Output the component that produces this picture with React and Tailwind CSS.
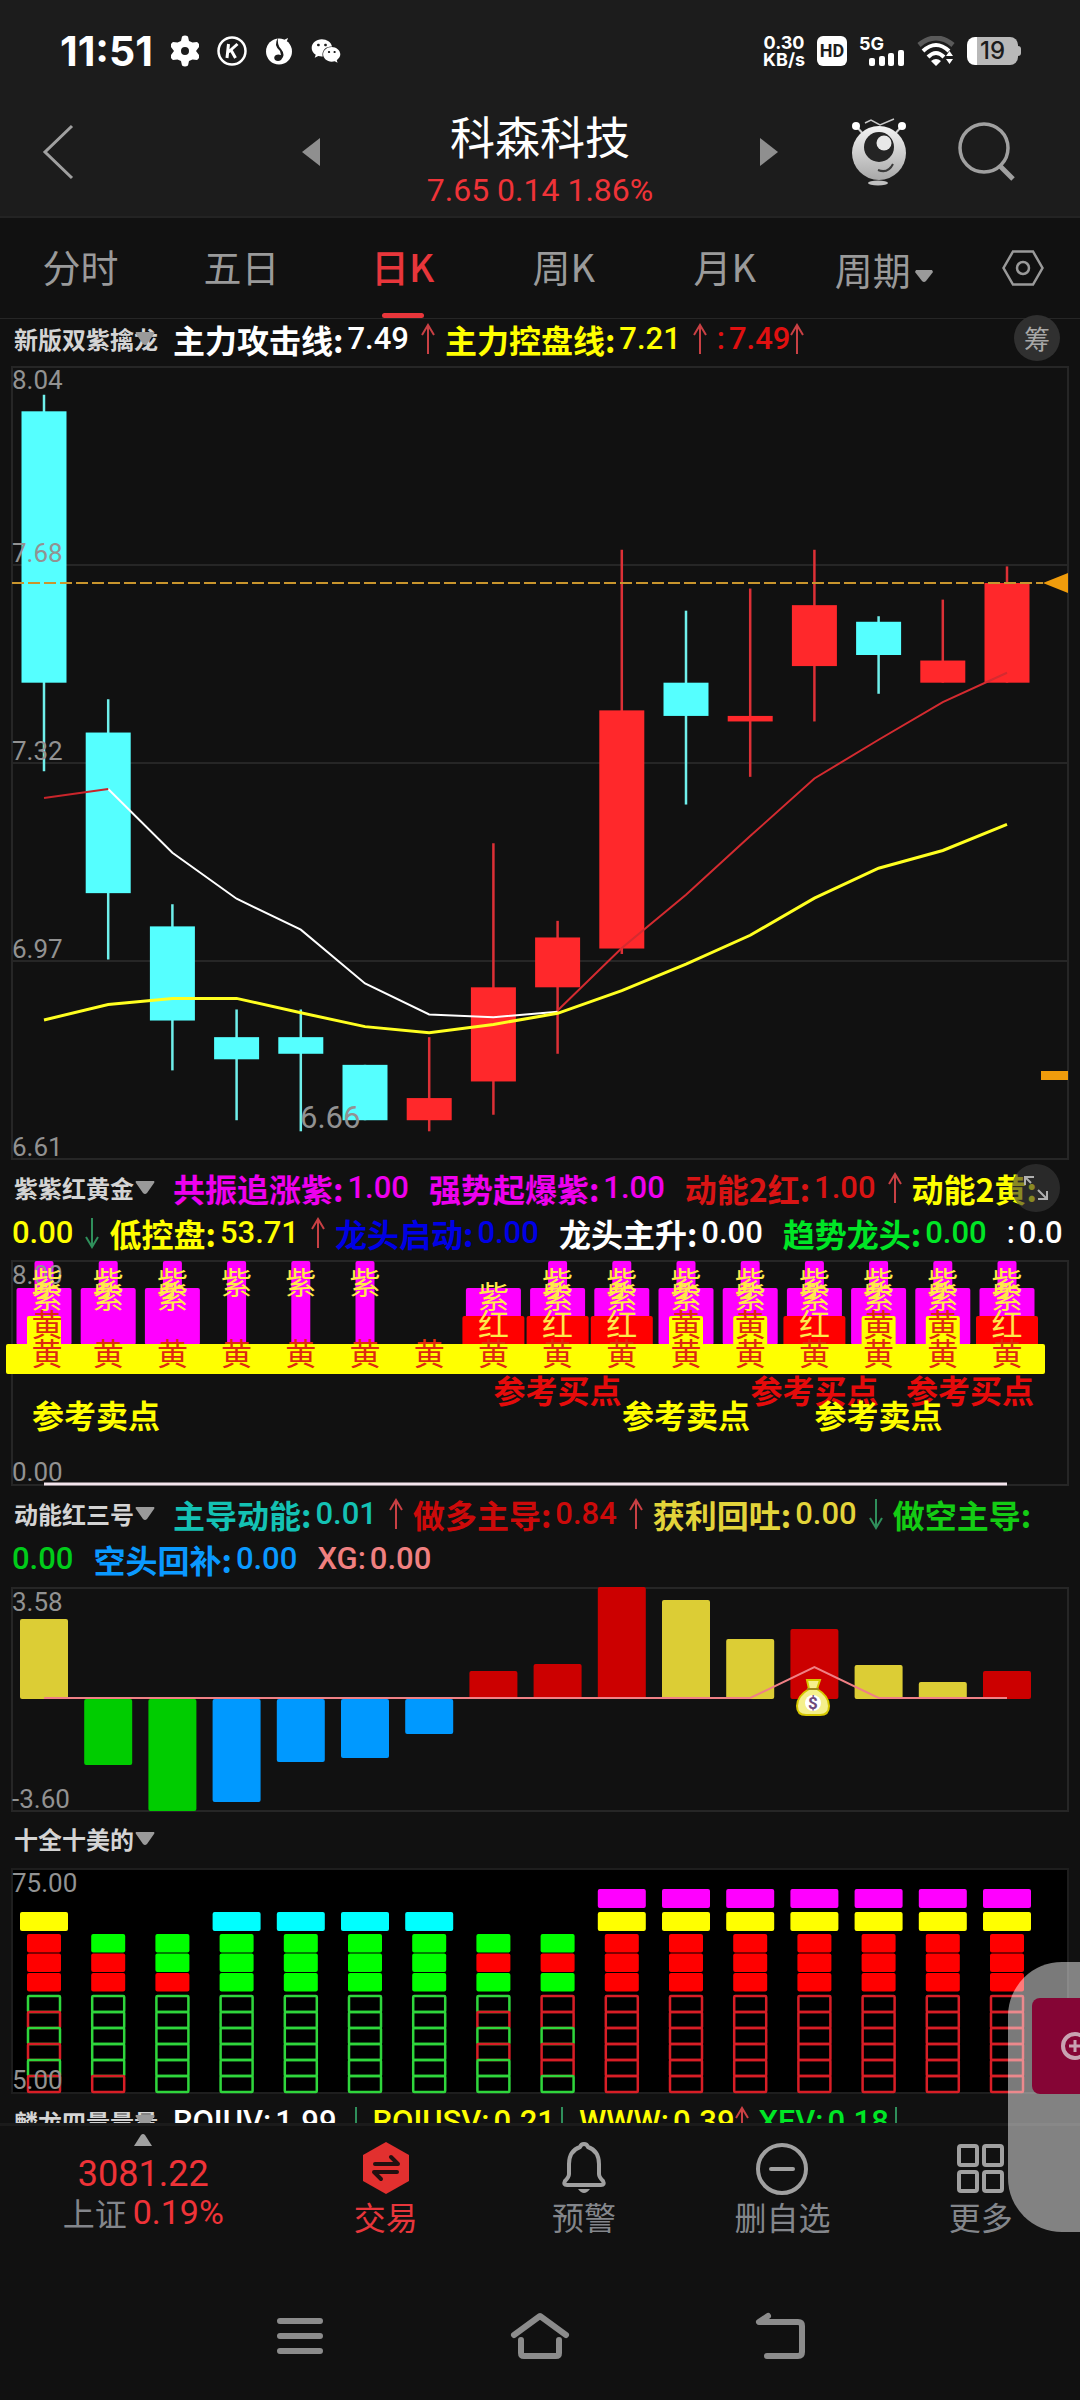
import { FaWeixin } from "react-icons/fa";

const STEP = 64.2;
const cx = (i) => 44 + i * STEP;
// first column of marks is kept inside the frame
const markX = (i) => Math.max(47, cx(i));

const PRICE_MAX = 8.04;
const PRICE_MIN = 6.61;
const PLOT_H = 792;
const py = (p) => ((PRICE_MAX - p) / (PRICE_MAX - PRICE_MIN)) * PLOT_H;

// top, bottom, high, low, up
const CANDLES = [
  [7.96, 7.47, 7.99, 7.31, 0],
  [7.38, 7.09, 7.44, 6.97, 0],
  [7.03, 6.86, 7.07, 6.77, 0],
  [6.83, 6.79, 6.88, 6.68, 0],
  [6.83, 6.8, 6.88, 6.66, 0],
  [6.78, 6.68, 6.78, 6.68, 0],
  [6.72, 6.68, 6.83, 6.66, 1],
  [6.92, 6.75, 7.18, 6.69, 1],
  [7.01, 6.92, 7.04, 6.8, 1],
  [7.42, 6.99, 7.71, 6.98, 1],
  [7.47, 7.41, 7.6, 7.25, 0],
  [7.41, 7.4, 7.64, 7.3, 1],
  [7.61, 7.5, 7.71, 7.4, 1],
  [7.58, 7.52, 7.59, 7.45, 0],
  [7.51, 7.47, 7.62, 7.47, 1],
  [7.65, 7.47, 7.68, 7.47, 1],
];

const WHITE_LINE = [7.278, 7.163, 7.08, 7.024, 6.927, 6.871, 6.866, 6.876];
const RED_LINE = [6.878, 6.991, 7.087, 7.193, 7.297, 7.367, 7.435, 7.488];
const YELLOW_LINE = [
  6.861, 6.889, 6.9, 6.9, 6.874, 6.849, 6.838, 6.853, 6.873, 6.914, 6.962, 7.014, 7.081, 7.135,
  7.167, 7.214,
];
const linePoints = (vals, from) => vals.map((v, i) => `${cx(i + from)},${py(v)}`).join(" ");

// n: narrow purple, w: wide purple, r: red, y: small yellow
const SIGNALS = [
  "nwy", "nw", "nw", "n", "n", "n", "", "wr",
  "nwr", "nwr", "nwy", "nwy", "nwr", "nwy", "nwy", "nwr",
];

const YELLOW = "#dccd35";
const GREEN = "#00cc00";
const BLUE = "#0099ff";
const RED = "#cc0000";
const BARS = [
  [-80, YELLOW], [66, GREEN], [112, GREEN], [103, BLUE],
  [63, BLUE], [59, BLUE], [35, BLUE], [-28, RED],
  [-35, RED], [-112, RED], [-99, YELLOW], [-60, YELLOW],
  [-70, RED], [-34, YELLOW], [-17, YELLOW], [-28, RED],
];

// cap | solid blocks | outlined blocks
const STACKS = [
  ["y", "RRR", "GRGRGR"],
  ["", "GRR", "GGGGGR"],
  ["", "GGR", "GGGGGG"],
  ["c", "GGG", "GGGGGG"],
  ["c", "GGG", "GGGGGG"],
  ["c", "GGG", "GGGGGG"],
  ["c", "GGG", "GGGGGG"],
  ["", "GRG", "GRGRGG"],
  ["", "GRG", "RRGRRG"],
  ["m", "RRR", "RRRRRR"],
  ["m", "RRR", "RRRRRR"],
  ["m", "RRR", "RRRRRR"],
  ["m", "RRR", "RRRRRR"],
  ["m", "RRR", "RRRRRR"],
  ["m", "RRR", "RRRRRR"],
  ["m", "RRR", "RRRRRR"],
];

const TABS = ["分时", "五日", "日K", "周K", "月K"];

function Arrow({ dir }) {
  return (
    <svg
      className={
        dir === "up"
          ? "h-8 w-3.5 fill-none stroke-[#c94044] stroke-2"
          : "h-8 w-3.5 fill-none stroke-[#2f8f5b] stroke-2"
      }
      viewBox="0 0 14 32"
    >
      <path d={dir === "up" ? "M7 31V3M1 12L7 2l6 10" : "M7 1v28M1 20l6 10 6-10"} />
    </svg>
  );
}

function Item({ label, value, color, arrow, plain, tight }) {
  return (
    <span
      className={`flex shrink-0 items-center font-['Roboto','Noto_Sans_CJK_SC',sans-serif] text-[31px] font-medium ${color}`}
    >
      {label && (
        <span
          className={
            plain ? "mr-1" : "mr-1 font-['Noto_Sans_CJK_SC',sans-serif] text-[32px] font-bold"
          }
        >
          {label}
        </span>
      )}
      {value && <span>{value}</span>}
      {arrow ? (
        <span className={tight ? "mr-2.5" : "mr-2.5 ml-3"}>
          <Arrow dir={arrow} />
        </span>
      ) : (
        <span className="w-5" />
      )}
    </span>
  );
}

function Legend({ title, children, second, badge }) {
  return (
    <div className="relative px-3 pb-1 leading-10 whitespace-nowrap">
      <div className="flex h-11 items-center overflow-hidden pb-1">
        <button className="mr-[18px] flex shrink-0 items-center text-2xl font-bold text-[#d4d4d4]">
          <span className="w-[123px] pl-0.5 text-left">{title}</span>
          <svg className="relative h-3.5 w-5 fill-[#9a9a9a]" viewBox="0 0 20 14">
            <path d="M1 0h18q1 1 0 2l-7 10q-2 2-4 0L1 2q-1-1 0-2z" />
          </svg>
        </button>
        {children}
      </div>
      {second && <div className="flex h-11 items-center overflow-hidden pb-0.5">{second}</div>}
      {badge}
    </div>
  );
}

function Chart({ height, label, children }) {
  return (
    <svg
      className="block h-auto w-full overflow-visible font-['Roboto','Noto_Sans_CJK_SC',sans-serif]"
      viewBox={`0 0 1080 ${height}`}
      role="img"
      aria-label={label}
    >
      {children}
    </svg>
  );
}

function Axis({ y, children }) {
  return (
    <text x="12" y={y} className="fill-[#929292] text-[26px]">
      {children}
    </text>
  );
}

function CandleChart() {
  return (
    <Chart height={801} label="日K">
      <g className="fill-none stroke-[#262626] stroke-2">
        <rect x="12" y="0" width="1056" height="792" />
        <path d="M12 198H1068M12 396H1068M12 594H1068" />
      </g>
      {CANDLES.map(([top, bottom, high, low, up], i) => (
        <g key={i}>
          <path
            d={`M${cx(i)} ${py(high)}V${py(low)}`}
            className={up ? "stroke-[#dd3036] stroke-[2.5]" : "stroke-[#6ff0ec] stroke-[2.5]"}
          />
          <rect
            x={cx(i) - 22.5}
            y={py(top)}
            width="45"
            height={py(bottom) - py(top)}
            className={up ? "fill-[#ff282b]" : "fill-[#55ffff]"}
          />
        </g>
      ))}
      <path d="M12 216H1043" strokeDasharray="12 4" className="stroke-[#c9952d] stroke-2" />
      <path d="M1043 216L1068 206V226zM1041 704h27v9h-27z" className="fill-[#f09c0c]" />
      <polyline points={linePoints(WHITE_LINE, 1)} className="fill-none stroke-white stroke-2" />
      <polyline points={linePoints(YELLOW_LINE, 0)} className="fill-none stroke-[#ffff20] stroke-[3]" />
      <polyline points={linePoints([7.262, 7.278], 0)} className="fill-none stroke-[#c9252b] stroke-2" />
      <polyline points={linePoints(RED_LINE, 8)} className="fill-none stroke-[#d42b30] stroke-2" />
      <Axis y="22">8.04</Axis>
      <Axis y="195">7.68</Axis>
      <Axis y="393">7.32</Axis>
      <Axis y="591">6.97</Axis>
      <Axis y="789">6.61</Axis>
      <text x="300" y="761" className="fill-[#929292] text-[31px]">
        6.66
      </text>
    </Chart>
  );
}

function Mark({ x, y, children, className }) {
  return (
    <text x={x} y={y} textAnchor="middle" className={className}>
      {children}
    </text>
  );
}

function SignalChart() {
  return (
    <Chart height={234} label="紫紫红黄金">
      <rect x="12" y="1" width="1056" height="224" className="fill-none stroke-[#262626] stroke-2" />
      {SIGNALS.map((s, i) => (
        <g key={i}>
          {s.includes("n") && (
            <rect x={cx(i) - 9.5} y="1" width="19" height="84" rx="2" className="fill-[#ff00ff]" />
          )}
          {s.includes("w") && (
            <rect x={cx(i) - 27.5} y="28" width="55" height="57" rx="2" className="fill-[#ff00ff]" />
          )}
          {s.includes("r") && (
            <rect x={cx(i) - 31} y="56" width="62" height="30" rx="2" className="fill-[#ff0000]" />
          )}
          {s.includes("y") && (
            <rect x={cx(i) - 17} y="56" width="34" height="30" rx="2" className="fill-[#ffff00]" />
          )}
        </g>
      ))}
      <rect x="6" y="84" width="1039" height="30" rx="2" className="fill-[#ffff00]" />
      <Axis y="24">8.00</Axis>
      {SIGNALS.map((s, i) => (
        <g key={i} className="text-[31px]">
          {s.includes("n") && <Mark x={markX(i)} y="34" className="fill-[#ffe94a]">紫</Mark>}
          {s.includes("w") && <Mark x={markX(i)} y="48" className="fill-[#ffe94a]">紫</Mark>}
          {s.includes("r") && <Mark x={markX(i)} y="76" className="fill-[#ffe94a]">红</Mark>}
          {s.includes("y") && <Mark x={markX(i)} y="76" className="fill-[#dd2a10]">黄</Mark>}
          <Mark x={markX(i)} y="105" className="fill-[#dd2a10]">黄</Mark>
        </g>
      ))}
      <g className="fill-[#e50b0b] text-[32px] font-bold">
        <Mark x={cx(8)} y="143">参考买点</Mark>
        <Mark x={cx(12)} y="143">参考买点</Mark>
        <Mark x="970" y="143">参考买点</Mark>
      </g>
      <g className="fill-[#ffff00] text-[32px] font-bold">
        <Mark x="96" y="168">参考卖点</Mark>
        <Mark x={cx(10)} y="168">参考卖点</Mark>
        <Mark x={cx(13)} y="168">参考卖点</Mark>
      </g>
      <path d="M44 224H1007" className="stroke-[#f5e6ee] stroke-[3]" />
      <Axis y="221">0.00</Axis>
    </Chart>
  );
}

function MomentumChart() {
  return (
    <Chart height={233} label="动能红三号">
      <rect x="12" y="2" width="1056" height="223" className="fill-none stroke-[#262626] stroke-2" />
      {BARS.map(([v, color], i) => (
        <rect
          key={i}
          x={cx(i) - 24}
          y={v < 0 ? 113 + v : 113}
          width="48"
          height={Math.abs(v)}
          rx="2"
          fill={color}
        />
      ))}
      <polyline
        points={`44,112 ${cx(11)},112 ${cx(12)},81 ${cx(13)},112 1007,112`}
        className="fill-none stroke-[#f08085] stroke-2"
      />
      {/* money bag */}
      <g>
        <path
          d="M807 94h13l-3 9q12 7 12 17 0 9-9 9h-14q-9 0-9-9 0-10 12-17z"
          className="fill-[#f5f08c] stroke-[#d6c800] stroke-2"
        />
        <path d="M807 103h12" className="stroke-[#a08a1a] stroke-2" />
        <circle cx="813" cy="117" r="8" className="fill-white" />
        <text x="813" y="123" textAnchor="middle" className="fill-[#6d4a7c] text-[17px] font-bold">
          $
        </text>
      </g>
      <Axis y="25">3.58</Axis>
      <Axis y="222">-3.60</Axis>
    </Chart>
  );
}

function StackChart() {
  return (
    <Chart height={233} label="十全十美的">
      <rect x="12" y="2" width="1056" height="224" className="fill-black stroke-[#1e1e1e] stroke-2" />
      {STACKS.map(([cap, solid, open], i) => (
        <g key={i}>
          {cap === "m" && (
            <rect x={cx(i) - 24} y="22" width="48" height="19" rx="2" className="fill-[#ff00ff]" />
          )}
          {cap && (
            <rect
              x={cx(i) - 24}
              y="45"
              width="48"
              height="19"
              rx="2"
              className={cap === "c" ? "fill-[#00ffff]" : "fill-[#ffff00]"}
            />
          )}
          {[...solid].map((c, k) => (
            <rect
              key={k}
              x={cx(i) - 17}
              y={67 + k * 19.5}
              width="34"
              height="18.5"
              rx="2"
              className={c === "R" ? "fill-[#ff0000]" : "fill-[#00ff00]"}
            />
          ))}
          {[...open].map((c, k) => (
            <rect
              key={k}
              x={cx(i) - 16}
              y={129 + k * 16}
              width="32"
              height="16"
              rx="1"
              className={
                c === "R"
                  ? "fill-none stroke-[#d81e26] stroke-[2.5]"
                  : "fill-none stroke-[#2fd63c] stroke-[2.5]"
              }
            />
          ))}
        </g>
      ))}
      <Axis y="25">75.00</Axis>
      <Axis y="222">5.00</Axis>
    </Chart>
  );
}

function StatusBar() {
  return (
    <div className="flex h-[102px] items-center justify-between pr-[59px] pl-[60px] text-white">
      <div className="flex items-center gap-[18px]">
        <span className="font-['Inter',sans-serif] text-[41px] leading-none font-bold">11:51</span>
        <svg className="h-8 w-7 fill-white" viewBox="0 0 28 32">
          <path
            fillRule="evenodd"
            d="M11 1.500Q14-.5 17 1.500L18 6l3.500 1.500L26 7q3 2 2 5l-3 4 3 4q1 3-2 5l-4.500-.5L18 26l-1 4.500q-3 2-6 0L10 26l-3.500-1.500L2 25q-3-2-2-5l3-4-3-4Q-1 9 2 7l4.500.5L10 6zM14 12a4 4 0 100 8 4 4 0 000-8z"
          />
        </svg>
        <svg className="size-[30px] fill-none stroke-white" viewBox="0 0 30 30">
          <circle cx="15" cy="15" r="13.500" strokeWidth="2.500" />
          <path d="M11.500 8L10 22M20.500 8L11.500 16M14 14l4.500 8" strokeWidth="3" />
        </svg>
        <svg className="size-7" viewBox="0 0 28 28">
          <circle cx="14" cy="14.500" r="13" className="fill-white" />
          <path
            d="M13 1Q12 8 16 12 21 18 16 23 13 25 10 23 8 20 11 18 13 17 16 18L15 14Q8 8 13 1z"
            className="fill-[#1c1c1c]"
          />
          <path d="M15 8Q16 4 23 1q-1 5-6 8z" className="fill-white" />
        </svg>
        <FaWeixin className="size-[30px]" />
      </div>

      <div className="flex items-center gap-3">
        <div className="text-center font-['Inter',sans-serif] text-lg leading-[17px] font-bold">
          0.30
          <br />
          KB/s
        </div>
        <span className="flex size-[30px] items-center justify-center rounded-md bg-white font-['Roboto',sans-serif] text-lg leading-none font-bold text-[#1c1c1c]">
          HD
        </span>
        <div className="flex h-[30px] items-end">
          <span className="-mr-4 self-start font-['Inter',sans-serif] text-lg leading-4 font-bold">5G</span>
          <svg className="h-4 w-[37px] fill-white" viewBox="0 0 37 16">
            <rect x="1" y="8" width="6" height="8" rx="2" />
            <rect x="11" y="6" width="6" height="10" rx="2" />
            <rect x="20" y="3" width="6" height="13" rx="2" />
            <rect x="30" y="0" width="6" height="16" rx="2" />
          </svg>
        </div>
        <svg className="h-[30px] w-[38px] fill-none" viewBox="0 0 38 30">
          <path d="M2 9Q19-5 36 9" className="stroke-[#5a5a5a] stroke-[5]" />
          <path d="M6 15Q19 3 32 15M11 21Q19 13 27 21" className="stroke-white stroke-[4]" />
          <path d="M14 25q5-4 10 0l-5 5zM29 20l3.500-5 3.500 5zM29 23l3.500 5 3.500-5z" className="fill-white" />
        </svg>
        <div className="flex items-center">
          <span className="flex h-7 w-[51px] items-center justify-center rounded-lg bg-linear-to-r from-white from-20% to-[#b8b8b8] to-20% font-['Inter',sans-serif] text-2xl leading-none font-medium text-[#1c1c1c]">
            19
          </span>
          <span className="h-2.5 w-[3px] rounded-r bg-[#b8b8b8]" />
        </div>
      </div>
    </div>
  );
}

function Mascot() {
  return (
    <svg className="h-[70px] w-14" viewBox="0 0 56 70">
      <defs>
        <linearGradient id="mascot" x1="0" y1="0" x2="0" y2="1">
          <stop offset="0" stopColor="#f4f4f4" />
          <stop offset="1" stopColor="#a8a8a8" />
        </linearGradient>
      </defs>
      <path d="M14 7l6-3 9 5 14-6" className="fill-none stroke-[#c8c8c8] stroke-[1.5]" />
      <path d="M5 10l9 10M51 10l-9 10" className="stroke-[#d0d0d0] stroke-2" />
      <circle cx="5" cy="10" r="4" className="fill-white" />
      <circle cx="51" cy="10" r="4" className="fill-white" />
      <circle cx="28" cy="37" r="27" fill="url(#mascot)" />
      <circle cx="28" cy="31" r="15" className="fill-[#242424]" />
      <circle cx="33" cy="27" r="7.500" className="fill-[#e8e8e8]" />
      <path d="M27 54Q37 58 42 48" className="fill-none stroke-[#3a3a3a] stroke-2" />
      <ellipse cx="27" cy="67" rx="10" ry="2.500" className="fill-[#c0c0c0]" />
    </svg>
  );
}

function Header() {
  return (
    <header className="border-b-2 border-[#232323] bg-[#1c1c1c]">
      <StatusBar />
      <div className="relative flex h-[114px] items-start justify-between px-10 pt-3.5">
        <button aria-label="返回" className="mt-2">
          <svg className="h-14 w-9 fill-none stroke-[#a0a0a0] stroke-[3]" viewBox="0 0 36 56">
            <path d="M32 2L5 28l27 26" />
          </svg>
        </button>
        <div className="absolute inset-x-0 top-0 mx-auto flex w-[476px] items-center justify-between">
          <button aria-label="上一个" className="pb-4">
            <svg className="h-7 w-[18px] fill-[#8f8f8f]" viewBox="0 0 18 28">
              <path d="M18 0v28L0 14z" />
            </svg>
          </button>
          <div className="pt-2 text-center">
            <h1 className="text-[45px] leading-[52px] text-white">科森科技</h1>
            <p className="font-['Roboto',sans-serif] text-[32px] leading-[56px] text-[#ef3338]">
              7.65 0.14 1.86%
            </p>
          </div>
          <button aria-label="下一个" className="pb-4">
            <svg className="h-7 w-[18px] fill-[#8f8f8f]" viewBox="0 0 18 28">
              <path d="M0 0v28l18-14z" />
            </svg>
          </button>
        </div>
        <div className="flex items-start gap-[50px] pr-[23px]">
          <button aria-label="助手">
            <Mascot />
          </button>
          <button aria-label="搜索" className="mt-1.5">
            <svg className="size-[60px] fill-none stroke-[#a0a0a0] stroke-[3.5]" viewBox="0 0 60 60">
              <circle cx="27" cy="26" r="24" />
              <path d="M43 44l13 13" strokeWidth="5" />
            </svg>
          </button>
        </div>
      </div>
    </header>
  );
}

function Tabs() {
  return (
    <nav className="grid h-[101px] grid-cols-[17fr_17fr_17fr_17fr_17fr_17fr_12fr] border-b border-[#262626] text-[38px] text-[#9a9a9a]">
      {TABS.map((t) => (
        <button
          key={t}
          className={t === "日K" ? "relative pb-1.5 font-medium text-[#e8363b]" : "relative pb-1.5"}
        >
          {t}
          {t === "日K" && (
            <span className="absolute inset-x-0 bottom-0 mx-auto h-[5px] w-[42px] rounded bg-[#e8363b]" />
          )}
        </button>
      ))}
      <button className="flex items-center justify-center gap-1 pr-1">
        周期
        <svg className="mt-4 h-3 w-[18px] fill-[#9a9a9a]" viewBox="0 0 18 12">
          <path d="M1 0h16l1 2-7 9q-2 2-4 0L0 2z" />
        </svg>
      </button>
      <button aria-label="设置" className="flex items-center justify-center">
        <svg className="h-9 w-[42px] fill-none stroke-[#9a9a9a] stroke-[2.5]" viewBox="0 0 42 36">
          <path d="M11 1.500h20L40.500 18 31 34.500H11L1.500 18z" />
          <circle cx="21" cy="18" r="6" />
        </svg>
      </button>
    </nav>
  );
}

function NavButton({ label, active, children }) {
  return (
    <button
      className={
        active
          ? "flex flex-col items-center pt-3.5 text-[32px] text-[#e8363b]"
          : "flex flex-col items-center pt-3.5 text-[32px] text-[#83868b]"
      }
    >
      <svg className="size-14 fill-none stroke-[#a0a0a0] stroke-[4]" viewBox="0 0 56 56">
        {children}
      </svg>
      <span className="leading-10">{label}</span>
    </button>
  );
}

function BottomNav() {
  return (
    <div className="relative">
      <nav className="grid h-[133px] grid-cols-[13fr_9fr_9fr_9fr_9fr] border-t-[3px] border-[#1b1b1b]">
        <button className="flex flex-col items-center pt-2">
          <svg className="h-3 w-[18px] fill-[#a0a0a0]" viewBox="0 0 18 12">
            <path d="M0 12h18L11 1q-2-2-4 0z" />
          </svg>
          <span className="mt-2 font-['Roboto',sans-serif] text-[36px] leading-10 text-[#ef3338]">3081.22</span>
          <span className="flex items-center gap-1.5 text-[32px] leading-9 text-[#83868b]">
            上证
            <span className="font-['Roboto',sans-serif] text-[34px] text-[#ef3338]">0.19%</span>
          </span>
        </button>
        <NavButton label="交易" active>
          <path d="M28 2l23 13v26L28 54 5 41V15z" className="fill-[#e2302f] stroke-none" />
          <path
            d="M17 24h23L33 17M39 32H16l7 7"
            strokeLinejoin="round"
            strokeLinecap="round"
            className="stroke-[#221010]"
          />
        </NavButton>
        <NavButton label="预警">
          <path
            d="M28 4Q31 4 32 7 43 11 43 24V34Q43 37 47 41 49 45 45 45H11Q7 45 9 41 13 37 13 34V24Q13 11 24 7 25 4 28 4z"
            strokeLinejoin="round"
          />
          <path d="M22 49h12q-6 8-12 0z" className="fill-[#a0a0a0] stroke-none" />
        </NavButton>
        <NavButton label="删自选">
          <circle cx="28" cy="29" r="24" />
          <path d="M17 29h22" strokeLinecap="round" />
        </NavButton>
        <NavButton label="更多">
          <rect x="6" y="6" width="18" height="19" rx="2" />
          <rect x="31" y="6" width="18" height="19" rx="2" />
          <rect x="6" y="32" width="18" height="19" rx="2" />
          <rect x="31" y="32" width="18" height="19" rx="2" />
        </NavButton>
      </nav>

      {/* floating handle */}
      <div className="absolute -top-[161px] right-0 h-[270px] w-[72px] rounded-l-[54px] bg-white/48 pt-9 pl-6">
        <button
          aria-label="添加"
          className="flex h-24 w-full items-center justify-end overflow-hidden rounded-l-lg bg-[#850535]"
        >
          <svg className="h-8 w-5 fill-none stroke-[#c9a3b2] stroke-[4]" viewBox="0 0 20 32">
            <circle cx="15" cy="16" r="12" />
            <path d="M15 10v12M9 16h12" strokeWidth="3" />
          </svg>
        </button>
      </div>
    </div>
  );
}

function SystemNav() {
  return (
    <nav className="flex h-36 items-center justify-center gap-[180px] pt-4">
      <button aria-label="菜单">
        <svg className="size-[60px] stroke-[#8c8c8c] stroke-[6]" viewBox="0 0 60 60">
          <path d="M10 15h40M10 30h40M10 45h40" strokeLinecap="round" />
        </svg>
      </button>
      <button aria-label="主页">
        <svg className="size-[60px] fill-none stroke-[#8c8c8c] stroke-[6]" viewBox="0 0 60 60">
          <path d="M4 29L30 10l26 19M11 34v13q0 3 3 3h32q3 0 3-3V34" strokeLinecap="round" strokeLinejoin="round" />
        </svg>
      </button>
      <button aria-label="后退">
        <svg className="size-[60px] fill-none stroke-[#8c8c8c] stroke-[6]" viewBox="0 0 60 60">
          <path d="M18 10L9 16h39q4 0 4 4v26q0 4-4 4H17" strokeLinecap="round" strokeLinejoin="round" />
        </svg>
      </button>
    </nav>
  );
}

export default function App() {
  return (
    <div className="min-h-screen overflow-hidden bg-[#111111] font-['Noto_Sans_CJK_SC',sans-serif]">
      <Header />
      <Tabs />

      <main>
        <Legend
          title="新版双紫擒龙"
          badge={
            <button className="absolute -top-1 right-5 size-[46px] rounded-full bg-[#303030] text-[26px] leading-none text-[#a8a8a8]">
              筹
            </button>
          }
        >
          <Item label="主力攻击线:" value="7.49" color="text-white" arrow="up" />
          <Item label="主力控盘线:" value="7.21" color="text-[#ffff00]" arrow="up" />
          <Item label=":" value="7.49" color="text-[#e01010]" plain tight arrow="up" />
        </Legend>
        <CandleChart />

        <Legend
          title="紫紫红黄金"
          badge={
            <button
              aria-label="展开"
              className="absolute -top-1 right-5 flex size-12 items-center justify-center rounded-full bg-[#3a3a3a]/60"
            >
              <svg className="size-7 fill-none stroke-[#b0b0b0] stroke-2" viewBox="0 0 28 28">
                <path d="M3 11V3h9M3 3l6 6M25 17v8h-9M25 25l-9-9" />
              </svg>
            </button>
          }
          second={
            <>
              <Item value="0.00" color="text-[#ffff00]" arrow="down" />
              <Item label="低控盘:" value="53.71" color="text-[#ffff00]" arrow="up" />
              <Item label="龙头启动:" value="0.00" color="text-[#0000e6]" />
              <Item label="龙头主升:" value="0.00" color="text-white" />
              <Item label="趋势龙头:" value="0.00" color="text-[#00e626]" />
              <Item label=":" value="0.0" color="text-white" plain />
            </>
          }
        >
          <Item label="共振追涨紫:" value="1.00" color="text-[#ee00ee]" />
          <Item label="强势起爆紫:" value="1.00" color="text-[#ee00ee]" />
          <Item label="动能2红:" value="1.00" color="text-[#d81414]" arrow="up" />
          <Item label="动能2黄:" color="text-[#ffff00]" />
        </Legend>
        <SignalChart />

        <Legend
          title="动能红三号"
          second={
            <>
              <Item value="0.00" color="text-[#00cc1a]" />
              <Item label="空头回补:" value="0.00" color="text-[#0a99ff]" />
              <Item label="XG:" value="0.00" color="text-[#f08080]" plain />
            </>
          }
        >
          <Item label="主导动能:" value="0.01" color="text-[#14c2b4]" arrow="up" />
          <Item label="做多主导:" value="0.84" color="text-[#cc0a0a]" arrow="up" />
          <Item label="获利回吐:" value="0.00" color="text-[#e3d43a]" arrow="down" />
          <Item label="做空主导:" color="text-[#14cc14]" />
        </Legend>
        <MomentumChart />

        <Legend title="十全十美的" />
        <StackChart />

        <div className="h-[23px] overflow-hidden pt-0.5">
          <Legend title="麟龙四量量量">
            <Item label="ROIUV:" value="1.99" color="text-white" plain arrow="down" />
            <Item label="ROIUSV:" value="0.21" color="text-[#ffff00]" plain tight arrow="down" />
            <Item label="WWW:" value="0.39" color="text-[#ffff00]" plain tight arrow="up" />
            <Item label="XFV:" value="0.18" color="text-[#00e626]" plain tight arrow="down" />
          </Legend>
        </div>
      </main>

      <BottomNav />
      <SystemNav />
    </div>
  );
}
